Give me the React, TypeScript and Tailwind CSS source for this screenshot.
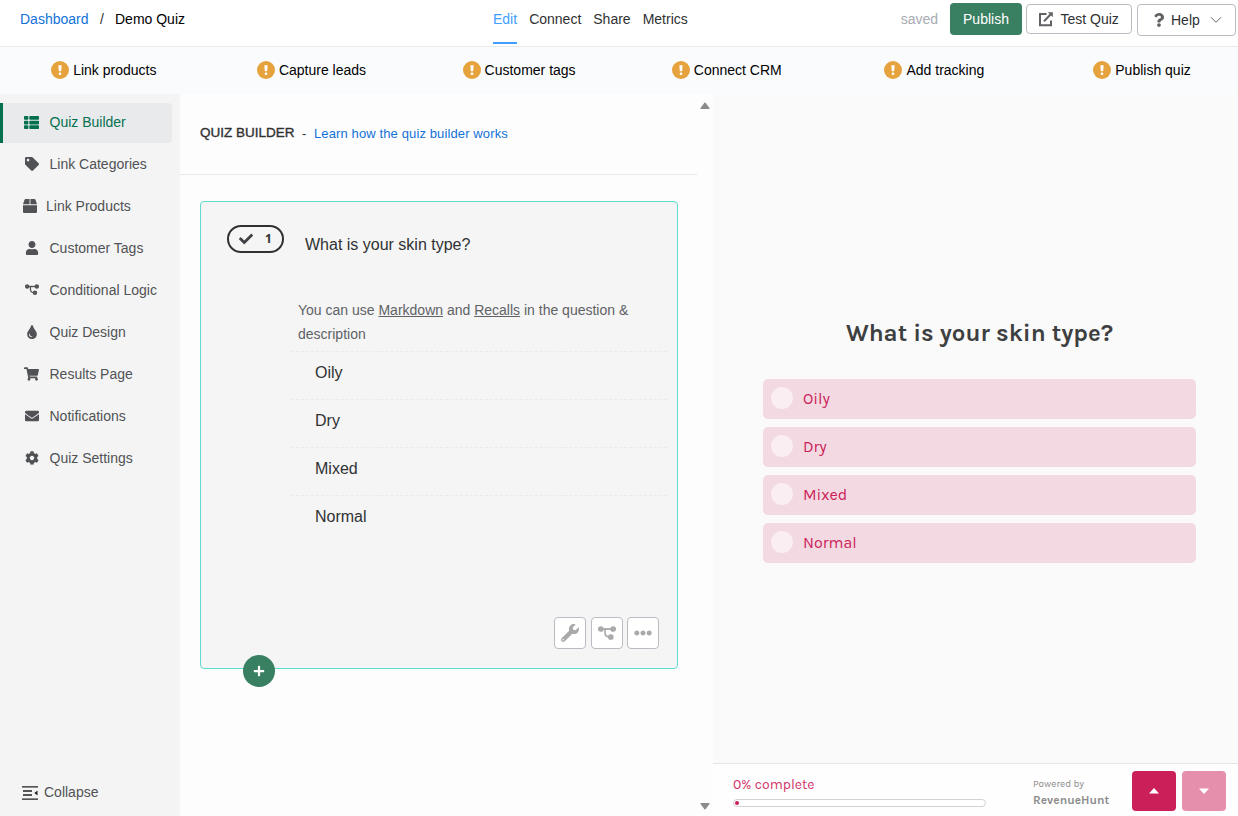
import React from "react";
import {
  FaThList,
  FaTag,
  FaBox,
  FaUser,
  FaTint,
  FaShoppingCart,
  FaEnvelope,
  FaCog,
  FaQuestion,
  FaCheck,
  FaWrench,
  FaPlus,
  FaEllipsisH,
} from "react-icons/fa";

const ARIAL = "font-['Liberation_Sans',Arial,sans-serif]";

function LogicIcon({ className }: { className?: string }) {
  return (
    <svg viewBox="0 0 18 15" className={className} fill="none" stroke="currentColor">
      <path d="M3 3H15" strokeWidth="1.8" />
      <path d="M7 3V6.5C7 9.5 8.3 11 12 11" strokeWidth="1.6" />
      <circle cx="2.8" cy="3" r="1.6" strokeWidth="2.5" />
      <circle cx="15.2" cy="3" r="1.6" strokeWidth="2.5" />
      <circle cx="12.8" cy="11" r="1.6" strokeWidth="2.5" />
    </svg>
  );
}

function WarnIcon() {
  return (
    <svg viewBox="0 0 18 18" className="mb-px size-[18px] shrink-0">
      <circle cx="9" cy="9" r="9" fill="#e6a23c" />
      <path d="M7.4 4.3h3.2l-.4 6H7.8z" fill="#fff" />
      <rect x="7.7" y="11.6" width="2.6" height="2.4" rx=".9" fill="#fff" />
    </svg>
  );
}

const steps = [
  { label: "Link products" },
  { label: "Capture leads" },
  { label: "Customer tags" },
  { label: "Connect CRM" },
  { label: "Add tracking" },
  { label: "Publish quiz" },
];

const nav = [
  { label: "Link Categories", icon: <FaTag className="size-[14px]" /> },
  { label: "Link Products", icon: <FaBox className="size-[14px]" />, tight: true },
  { label: "Customer Tags", icon: <FaUser className="size-[14px]" /> },
  { label: "Conditional Logic", icon: <LogicIcon className="h-[12px] w-[14px]" /> },
  { label: "Quiz Design", icon: <FaTint className="size-[14px]" /> },
  { label: "Results Page", icon: <FaShoppingCart className="h-[14px] w-4" /> },
  { label: "Notifications", icon: <FaEnvelope className="size-[14px]" /> },
  { label: "Quiz Settings", icon: <FaCog className="size-[14px]" /> },
];

const answers = ["Oily", "Dry", "Mixed", "Normal"];

function Header() {
  return (
    <header className="flex h-[47px] shrink-0 border-b border-[#e9e9eb] bg-white text-[14px] leading-5">
      <div className="flex w-[493px] pt-[9px] pl-5">
        <span className="w-[80px] text-[#1272d8]">Dashboard</span>
        <span className="w-[15px] text-[#303133]">/</span>
        <span className="text-black">Demo Quiz</span>
      </div>
      <nav className="flex gap-3 pt-[9px] text-[#303133]">
        <span className="h-[35px] border-b-2 border-[#409eff] text-[#409eff]">Edit</span>
        <span>Connect</span>
        <span>Share</span>
        <span>Metrics</span>
      </nav>
      <div className="ml-auto flex items-start pt-[3px] pr-0.5">
        <span className="mr-3 pt-1.5 text-[#a8abb2]">saved</span>
        <button className="mr-1 h-8 w-[72px] rounded bg-[#397f62] text-white">Publish</button>
        <button className="mt-px mr-[5px] flex h-[30px] w-[106px] items-center rounded border border-[#b9bcc2] bg-white pl-[11px] text-[#303133]">
          <svg viewBox="0 0 16 16" className="mr-[6.5px] size-4" fill="none" stroke="#606266" strokeWidth="2">
            <path d="M8.5 3H2v11.2h11V9.5" />
            <path d="M6 10.3 13 3" />
            <path d="M9.8 1.2h5v5z" fill="#606266" stroke="none" />
          </svg>
          Test Quiz
        </button>
        <button className="mt-px flex h-8 w-[99px] items-center rounded border border-[#b9bcc2] bg-white pl-[14px] text-[#303133]">
          <FaQuestion className="mr-[5px] size-[14px] text-[#606266]" />
          <span className="mr-[10px]">Help</span>
          <svg viewBox="0 0 12 8" className="h-[8px] w-[12px]" fill="none" stroke="#606266">
            <path d="m1 1.3 5 5 5-5" />
          </svg>
        </button>
      </div>
    </header>
  );
}

function Sidebar() {
  return (
    <aside className="flex w-[180px] shrink-0 flex-col bg-[#f4f4f4] pt-[9px] text-[14px] text-[#505255]">
      <div className="mb-[2px] flex h-10 w-[172px] items-center rounded-r border-l-[3px] border-[#04704f] bg-[#e9eaeb] text-[#04704f]">
        <span className="mr-[10.5px] mb-px ml-[21px] flex w-[15px] justify-center">
          <FaThList className="size-[15px]" />
        </span>
        <span className="mb-px">Quiz Builder</span>
      </div>
      {nav.map((item) => (
        <div key={item.label} className="mb-[2px] flex h-10 items-center">
          <span
            className={
              item.tight
                ? "mr-[9px] mb-[2px] ml-[22px] flex w-[15px] justify-center"
                : "mr-[10.5px] mb-[2px] ml-6 flex w-[15px] shrink-0 justify-center"
            }
          >
            {item.icon}
          </span>
          <span className="mb-px">{item.label}</span>
        </div>
      ))}
      <div className="mt-auto mb-[13px] flex h-[22px] items-center pl-[22px]">
        <svg viewBox="0 0 16 14" className="mt-[2px] mr-[6px] h-[14px] w-4" stroke="#202124" strokeWidth="1.3">
          <path d="M0 .8h16M1 5h9M1 9h9M0 13.2h16" />
          <path d="M15.5 4.5v5L12.3 7z" fill="#202124" stroke="none" />
        </svg>
        Collapse
      </div>
    </aside>
  );
}

function QuestionCard() {
  return (
    <section className="relative ml-5 h-[468px] w-[478px] rounded border border-[#5fdccf] bg-[#f5f5f5]">
      <div className="flex">
        <div className="mt-[23px] ml-[26px] flex h-7 w-[57px] items-center rounded-full border-2 border-[#303133] pl-[10px] text-[#303133]">
          <FaCheck className="size-[14px] text-[#404144]" />
          <span className="ml-3 font-['Noto_Sans',sans-serif] text-xs font-bold">1</span>
        </div>
        <h2 className="mt-[31px] ml-[21px] text-base leading-6 text-[#303133]">What is your skin type?</h2>
      </div>
      <p className="mt-[41px] ml-[97px] w-[350px] text-[14px] leading-6 text-[#606266]">
        You can use <u>Markdown</u> and <u>Recalls</u> in the question &amp; description
      </p>
      <ul className="mt-[5px] ml-[90px] w-[376px]">
        {answers.map((a) => (
          <li
            key={a}
            className="h-12 border-t border-dashed border-[#eaeaea] pt-[9px] pl-6 text-base leading-6 text-[#303133]"
          >
            {a}
          </li>
        ))}
      </ul>
      <div className="mt-[74px] ml-[353px] flex text-[#a9a9a9]">
        <button className="mr-[5px] flex size-8 items-center justify-center rounded border border-[#b9bcc2] bg-white">
          <FaWrench className="size-[18px]" />
        </button>
        <button className="mr-1 flex size-8 items-center justify-center rounded border border-[#b9bcc2] bg-white">
          <LogicIcon className="h-[15px] w-[18px]" />
        </button>
        <button className="flex size-8 items-center justify-center rounded border border-[#b9bcc2] bg-white">
          <FaEllipsisH className="size-[18px]" />
        </button>
      </div>
      <button className="absolute top-[453px] left-[42px] flex size-8 items-center justify-center rounded-full bg-[#397f62] text-white">
        <FaPlus className="size-3" />
      </button>
    </section>
  );
}

function Builder() {
  return (
    <main className="flex w-[533px] shrink-0 bg-[#fdfdfd]">
      <div className="w-[517px]">
        <div className="mb-[26px] flex h-[81px] border-b border-[#e9e9eb] pt-[29px] pl-5 text-[13px] leading-5">
          <span className="w-[102px] text-[13.5px] text-[#303133] [-webkit-text-stroke:0.35px_#303133]">
            QUIZ BUILDER
          </span>
          <span className="w-3 pt-px text-[#303133]">-</span>
          <span className="pt-px tracking-[0.12px] text-[#1272d8]">Learn how the quiz builder works</span>
        </div>
        <QuestionCard />
      </div>
      <div className="flex w-4 flex-col items-center justify-between pt-2 pb-[6px]">
        <svg viewBox="0 0 10 8" className="h-[8px] w-[10px]">
          <path d="M5 1.2 8.9 6.4H1.1z" fill="#8b8b8b" stroke="#8b8b8b" strokeWidth="1.4" strokeLinejoin="round" />
        </svg>
        <svg viewBox="0 0 10 8" className="h-[8px] w-[10px]">
          <path d="M5 6.8 8.9 1.6H1.1z" fill="#8b8b8b" stroke="#8b8b8b" strokeWidth="1.4" strokeLinejoin="round" />
        </svg>
      </div>
    </main>
  );
}

function Preview() {
  return (
    <section className="flex w-[525px] flex-col bg-[#fafafa] font-[Karla,Inter,sans-serif]">
      <div className="flex-1 pt-[223px] pl-[50px]">
        <h1 className="mb-[30px] w-[433px] text-center text-[24px] leading-8 font-bold text-[#3d3f40]">
          What is your skin type?
        </h1>
        <ul className="flex w-[433px] flex-col gap-2">
          {answers.map((a) => (
            <li
              key={a}
              className="flex h-10 items-center rounded-[5px] bg-[#f3d9e1] pl-2 text-base text-[#cb1f5a]"
            >
              <span className="mr-[10px] mb-[2px] size-[22px] rounded-full bg-[#faeef2]" />
              {a}
            </li>
          ))}
        </ul>
      </div>
      <footer className="flex h-[53px] border-t border-[#e4e4e4] bg-[#fefefe] pl-5">
        <div className="w-[300px] pt-[11px]">
          <div className="text-[14px] leading-5 text-[#d23369]">0% complete</div>
          <div className="mt-[4px] flex h-2 w-[253px] items-center rounded-full border border-[#d3d3d3] bg-white pl-px">
            <span className="size-1 rounded-full bg-[#cb1f5a]" />
          </div>
        </div>
        <div className="w-[99px] pt-3 leading-4 text-[#8c8c8c]">
          <div className="text-[10px]">Powered by</div>
          <div className="text-[12px] font-bold">RevenueHunt</div>
        </div>
        <div className="flex gap-[6px] pt-[7px]">
          <button className="flex h-10 w-11 items-center justify-center rounded bg-[#cb1f5a]">
            <svg viewBox="0 0 10 6" className="h-[6px] w-[10px]">
              <path d="M5 0 10 5.4H0z" fill="#fff" />
            </svg>
          </button>
          <button className="flex h-10 w-11 items-center justify-center rounded bg-[#e58fac]">
            <svg viewBox="0 0 10 6" className="h-[6px] w-[10px]">
              <path d="M5 6 10 .6H0z" fill="#fff" />
            </svg>
          </button>
        </div>
      </footer>
    </section>
  );
}

export default function App() {
  return (
    <div className={`${ARIAL} flex h-[816px] w-[1238px] flex-col overflow-hidden bg-white`}>
      <Header />
      <div className="flex h-[47px] shrink-0 bg-[#fafbfd] text-[14px] text-black">
        {steps.map((s) => (
          <div key={s.label} className="flex w-[207.65px] shrink-0 items-center justify-center gap-1">
            <WarnIcon />
            {s.label}
          </div>
        ))}
      </div>
      <div className="flex min-h-0 flex-1">
        <Sidebar />
        <Builder />
        <Preview />
      </div>
    </div>
  );
}
